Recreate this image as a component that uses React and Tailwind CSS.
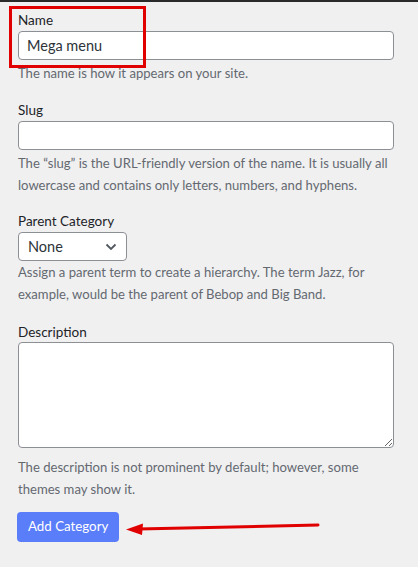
import React from "react";

const font = { fontFamily: 'Lato, "Noto Sans", sans-serif' };

const Label = ({ children }) => (
  <div className="text-[13.5px] leading-[20px] text-[#1d2327]">{children}</div>
);

const Help = ({ children, className = "" }) => (
  <p className={"text-[13.1px] leading-[22px] text-[#646970] whitespace-nowrap " + className}>
    {children}
  </p>
);

export default function App() {
  return (
    <div
      className="relative w-[418px] h-[567px] overflow-hidden bg-[#f0f0f1] border-t-2 border-[#2a2a2a]"
      style={font}
    >
      <div className="pl-[18px] pt-[8px]">
        {/* Name */}
        <Label>Name</Label>
        <input
          type="text"
          defaultValue="Mega menu"
          className="mt-[1px] block w-[376px] h-[29px] px-[8px] bg-white border border-[#8c8f94] rounded-[4px] text-[14.5px] text-[#2c3338] outline-none"
        />
        <Help className="mt-[2px]">The name is how it appears on your site.</Help>

        {/* Slug */}
        <div className="mt-[16px]">
          <Label>Slug</Label>
          <input
            type="text"
            className="mt-[1px] block w-[376px] h-[29px] px-[8px] bg-white border border-[#8c8f94] rounded-[4px] text-[14.5px] outline-none"
          />
          <Help className="mt-[2px]">
            The “slug” is the URL-friendly version of the name. It is usually all
            <br />
            lowercase and contains only letters, numbers, and hyphens.
          </Help>
        </div>

        {/* Parent Category */}
        <div className="mt-[15px]">
          <Label>Parent Category</Label>
          <div className="mt-[1px] flex items-center justify-between w-[109px] h-[29px] pl-[9px] pr-[9px] bg-white border border-[#8c8f94] rounded-[4px] text-[14.5px] text-[#2c3338]">
            <span>None</span>
            <svg width="12" height="8" viewBox="0 0 12 8" fill="none">
              <path d="M1.5 1.5 L6 6 L10.5 1.5" stroke="#50575e" strokeWidth="1.8" />
            </svg>
          </div>
          <Help>
            Assign a parent term to create a hierarchy. The term Jazz, for
            <br />
            example, would be the parent of Bebop and Big Band.
          </Help>
        </div>

        {/* Description */}
        <div className="mt-[17px]">
          <Label>Description</Label>
          <textarea className="block w-[376px] h-[106px] bg-white border border-[#8c8f94] rounded-[4px] outline-none" />
          <Help className="mt-[8px]">
            The description is not prominent by default; however, some
            <br />
            themes may show it.
          </Help>
        </div>

        <button className="mt-[12px] -ml-[1px] h-[30px] px-[11px] rounded-[4px] bg-[#5a7dfa] text-white text-[13.3px]">
          Add Category
        </button>
      </div>

      {/* annotations */}
      <div className="absolute left-[9px] top-[4px] w-[137px] h-[62px] border-[3px] border-[#e00000]" />
      <svg
        className="absolute left-0 top-0"
        width="418"
        height="567"
        viewBox="0 0 418 567"
      >
        <line x1="318" y1="523" x2="138" y2="527" stroke="#e00000" strokeWidth="3" strokeLinecap="round" />
        <polygon points="126,527.5 143,521.5 142,533" fill="#e00000" />
      </svg>
    </div>
  );
}
